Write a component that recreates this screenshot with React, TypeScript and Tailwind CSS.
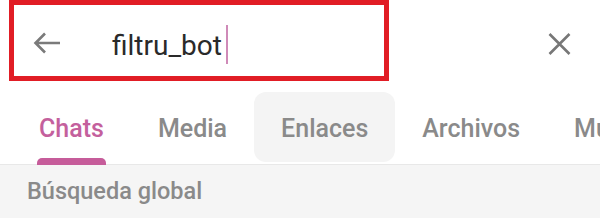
import React from "react";

const tabs = ["Chats", "Media", "Enlaces", "Archivos", "Multimedia"];

export default function App() {
  return (
    <div className="w-[600px] h-[218px] bg-white overflow-hidden flex flex-col" style={{ fontFamily: "Roboto, 'Liberation Sans', sans-serif" }}>
      {/* Header */}
      <div className="flex items-start h-[92px] shrink-0">
        <div className="ml-[9px] w-[380px] h-[81px] border-[5px] border-[#e11d25] flex items-start">
          <svg className="ml-[19px] mt-[27px]" width="28" height="22" viewBox="0 0 28 22" fill="none">
            <path d="M27 11H2.5M12 1.5L2.5 11L12 20.5" stroke="#7a7a7a" strokeWidth="2.6" strokeLinecap="butt" />
          </svg>
          <span className="ml-[51px] mt-[25px] text-[28px] leading-[32px] text-[#2a2a2a] whitespace-nowrap">filtru_bot</span>
          <span className="ml-[4px] mt-[20px] w-[2px] h-[39px] bg-[#cf8ab8]" />
        </div>
        <svg className="ml-[159px] mt-[33px]" width="23" height="22" viewBox="0 0 23 22" fill="none">
          <path d="M1.5 1L21.5 21M21.5 1L1.5 21" stroke="#777777" strokeWidth="2.6" />
        </svg>
      </div>
      {/* Tabs */}
      <div className="flex items-start h-[72px] pl-[12px] shrink-0 whitespace-nowrap">
        {tabs.map((t, i) => (
          <div
            key={t}
            className={`relative h-[70px] px-[27px] pt-[22px] rounded-[12px] text-[25px] leading-[29px] font-medium ${i === 2 ? "bg-[#f4f4f4]" : ""} ${i === 0 ? "text-[#c4609d]" : "text-[#8a8a8a]"}`}
          >
            {t}
            {i === 0 && (
              <span className="absolute left-[25px] right-[25px] bottom-[-3px] h-[7px] rounded-t-[5px] bg-[#c65c9a]" />
            )}
          </div>
        ))}
      </div>
      {/* Global search */}
      <div className="flex-1 bg-[#f5f5f5] border-t border-[#e8e8e8] pl-[27px] pt-[13px]">
        <span className="text-[23.5px] leading-[27px] font-medium text-[#8a8a8a]">Búsqueda global</span>
      </div>
    </div>
  );
}
